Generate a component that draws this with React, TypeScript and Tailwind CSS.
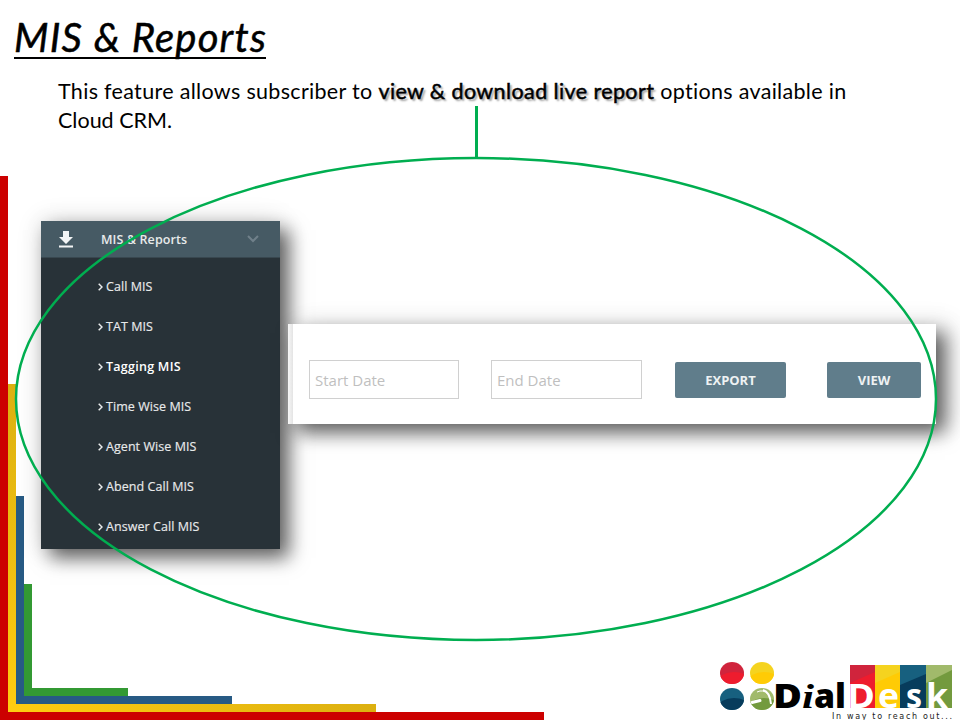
import React from "react";

const reports = [
  { label: "Call MIS" },
  { label: "TAT MIS" },
  { label: "Tagging MIS", active: true },
  { label: "Time Wise MIS" },
  { label: "Agent Wise MIS" },
  { label: "Abend Call MIS" },
  { label: "Answer Call MIS" },
];

function CornerFrame() {
  return (
    <div className="pointer-events-none absolute inset-0">
      <div className="absolute bottom-0 left-0 h-[544px] w-[544px] border-b-8 border-l-8 border-[#cc0000]" />
      <div className="absolute bottom-2 left-2 h-[328px] w-2 bg-linear-to-t from-[#ffcc11] to-[#dcb010]" />
      <div className="absolute bottom-2 left-2 h-2 w-[368px] bg-linear-to-r from-[#ffcc11] to-[#dcb010]" />
      <div className="absolute bottom-4 left-4 h-[208px] w-[216px] border-b-8 border-l-8 border-[#275a84]" />
      <div className="absolute bottom-6 left-6 h-[112px] w-[104px] border-b-8 border-l-8 border-[#339933]" />
    </div>
  );
}

function Sidebar() {
  return (
    <nav className="h-[328px] w-[239px] bg-[#283238] font-['Open_Sans',sans-serif] text-[12.5px] text-[#e8eaeb] shadow-[9px_9px_18px_rgba(0,0,0,0.6),0_0_24px_rgba(0,0,0,0.14)]">
      <div className="flex h-[37px] items-center border-b border-[#38474f] bg-[#465a64] pl-[18px] pr-[21px]">
        <svg width="14" height="18" viewBox="0 0 14 18" fill="#f3f5f6">
          <path d="M4 1h6v6h4L7 14 0 7h4zM0 15.5h14v2H0z" />
        </svg>
        <span className="ml-[28px] flex-1 pt-[2px] font-semibold tracking-[0.1px]">MIS &amp; Reports</span>
        <svg width="12" height="8" viewBox="0 0 12 8" fill="none" stroke="#70808a" strokeWidth="2">
          <path d="M1 1l5 5 5-5" />
        </svg>
      </div>
      <ul className="pt-[9px]">
        {reports.map((r) => (
          <li key={r.label} className="flex h-10 items-center pl-[57px]">
            <svg width="5" height="8" viewBox="0 0 5 8" fill="none" stroke="#e8eaeb" strokeWidth="1.5">
              <path d="M.7.7L4 4 .7 7.3" />
            </svg>
            <span className={r.active ? "ml-[3px] font-semibold tracking-[0.26px] text-white" : "ml-[3px] tracking-[0.06px] [-webkit-text-stroke:0.15px_#e8eaeb]"}>
              {r.label}
            </span>
          </li>
        ))}
      </ul>
    </nav>
  );
}

function DateForm() {
  return (
    <section className="relative flex h-[100px] w-[648px] bg-white bg-linear-to-r from-[#f7f7f7] from-0% via-[#e4e4e4] via-[5px] to-white to-[5px] pl-[21px] pt-[36px] font-['Open_Sans',sans-serif] shadow-[9px_9px_18px_rgba(0,0,0,0.6),14px_0_24px_rgba(0,0,0,0.12)]">
      <div className="flex h-[39px] w-[150px] items-center border border-[#d0d0d0] pl-[5px] pt-[2px] text-[15px] text-[#bfbfbf]">Start Date</div>
      <div className="ml-[32px] flex h-[39px] w-[151px] items-center border border-[#d0d0d0] pl-[5px] pt-[2px] text-[15px] text-[#bfbfbf]">End Date</div>
      <button className="ml-[33px] mt-[2px] h-9 w-[111px] rounded-[2px] bg-[#607d8b] pt-px text-[13px] font-bold tracking-[-0.05px] text-[#eef2f3]">EXPORT</button>
      <button className="ml-[41px] mt-[2px] h-9 w-[94px] rounded-[2px] bg-[#607d8b] pt-px text-[13px] font-bold tracking-[-0.05px] text-[#eef2f3]">VIEW</button>
    </section>
  );
}

function Logo() {
  return (
    <svg className="absolute left-[716px] top-[656px]" width="244" height="64" viewBox="716 656 244 64">
      <defs>
        <clipPath id="c1"><ellipse cx="732" cy="673" rx="12" ry="11" /></clipPath>
        <clipPath id="c2"><ellipse cx="762" cy="673" rx="12" ry="11" /></clipPath>
        <clipPath id="c3"><ellipse cx="732" cy="699" rx="12" ry="11" /></clipPath>
        <clipPath id="c4"><ellipse cx="762" cy="699" rx="12" ry="11" /></clipPath>
      </defs>
      <g clipPath="url(#c1)"><path fill="#d0243c" d="M720 660h24v26h-24z" /><ellipse cx="734" cy="681" rx="16" ry="9" fill="#ee1c2e" /></g>
      <g clipPath="url(#c2)"><path fill="#f5d31f" d="M750 660h24v26h-24z" /><ellipse cx="764" cy="681" rx="16" ry="9" fill="#ffcb05" /></g>
      <g clipPath="url(#c3)"><path fill="#17607f" d="M720 686h24v26h-24z" /><ellipse cx="734" cy="707" rx="16" ry="9" fill="#073c5c" /></g>
      <g clipPath="url(#c4)">
        <path fill="#a1ba6b" d="M750 686h24v26h-24z" />
        <ellipse cx="764" cy="707" rx="16" ry="9" fill="#739a3e" />
        <path d="M752 702.5l8-2" stroke="#fff" strokeWidth="3" fill="none" strokeLinecap="round" />
        <path d="M763 690q7 2 8 14" stroke="#fff" strokeWidth="2" fill="none" />
        <path d="M757 692q6-3 11 2" stroke="#fff" strokeWidth="1" fill="none" />
      </g>
      <path fill="#d0243c" d="M850 665h25v43h-25z" /><path fill="#ee1c2e" d="M850 683l25-11v36h-25z" />
      <path fill="#f5d31f" d="M875 665h25v43h-25z" /><path fill="#ffcb05" d="M875 683l25-11v36h-25z" />
      <path fill="#17607f" d="M900 665h26v43h-26z" /><path fill="#073c5c" d="M900 685l26-11v34h-26z" />
      <path fill="#a1ba6b" d="M926 665h26v43h-26z" /><path fill="#739a3e" d="M926 683l26-13v38h-26z" />
      <g fontFamily="Open Sans, sans-serif" fontWeight="800" fontSize="34">
        <text x="773" y="708" textLength="29" lengthAdjust="spacingAndGlyphs">D</text>
        <text x="802" y="708" fontFamily="Liberation Serif, serif" fontStyle="italic" fontSize="34" textLength="12" lengthAdjust="spacingAndGlyphs">i</text>
        <text x="814" y="708" textLength="32" lengthAdjust="spacingAndGlyphs">al</text>
        <g fill="#fff" fontWeight="700">
          <text x="847" y="708" textLength="28" lengthAdjust="spacingAndGlyphs">D</text>
          <text x="878" y="708" textLength="21" lengthAdjust="spacingAndGlyphs">e</text>
          <text x="906" y="708" textLength="16" lengthAdjust="spacingAndGlyphs">s</text>
          <text x="926" y="708" textLength="22" lengthAdjust="spacingAndGlyphs">k</text>
        </g>
      </g>
      <text x="832" y="719" fontFamily="DejaVu Sans, sans-serif" fontSize="8" fill="#222" textLength="120">In way to reach out...</text>
    </svg>
  );
}

export default function App() {
  return (
    <main className="relative h-[720px] w-[960px] overflow-hidden bg-white text-black">
      <CornerFrame />
      <header className="h-[221px] pl-[14px] pt-[14px]">
        <h1 className="h-[45px] w-[252px] whitespace-nowrap border-b-2 border-black font-['Lato',sans-serif] text-[40px] leading-[46px] tracking-[1.2px] italic [-webkit-text-stroke:0.5px_black]">
          MIS &amp; Reports
        </h1>
        <p className="ml-[44px] mt-[18px] w-[840px] whitespace-nowrap font-['Lato',sans-serif] text-[21.5px] leading-[29px]">
          <span className="tracking-[0.32px]">
            This feature allows subscriber to{" "}
            <span className="tracking-[0.4px] [text-shadow:2px_2px_2px_rgba(0,0,0,0.4)] [-webkit-text-stroke:0.5px_black]">view &amp; download live report</span>
            {" "}options available in
          </span>
          <br />
          Cloud CRM.
        </p>
      </header>
      <div className="relative flex pl-[41px]">
        <Sidebar />
        <div className="pl-2 pt-[103px]"><DateForm /></div>
      </div>
      <svg className="pointer-events-none absolute inset-0" width="960" height="720" fill="none" stroke="#00ae50">
        <path d="M476.5 106v52" strokeWidth="3" />
        <ellipse cx="476" cy="399" rx="460" ry="241" strokeWidth="2.5" />
      </svg>
      <Logo />
    </main>
  );
}
